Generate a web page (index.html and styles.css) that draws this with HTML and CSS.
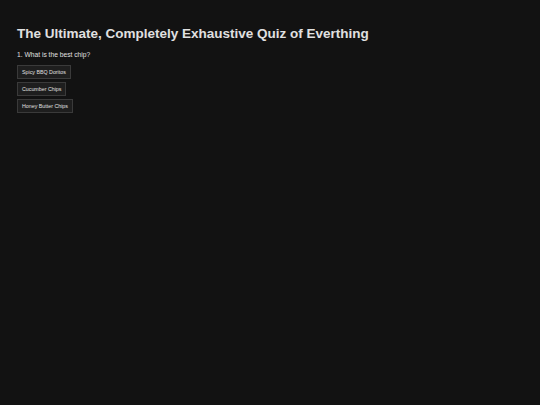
FILE: index.html
```html
<!DOCTYPE html>
<html lang="en">
<head>
    <meta charset="UTF-8">
    <meta name="viewport" content="width=device-width, initial-scale=1.0">
    <title>Quiz</title>
<link rel="stylesheet" href="styles.css">
</head>
<body>
    <div class="quiz">
        <h1 class="quiz-title">The Ultimate, Completely Exhaustive Quiz of Everthing</h1>
        <p class="question">1. What is the best chip?</p>
        <div class="answers">
            <button class="answer">Spicy BBQ Doritos</button>
            <button class="answer">Cucumber Chips</button>
            <button class="answer">Honey Butter Chips</button>
        </div>
    </div>
</body>
</html>
```

FILE: styles.css
```css
body {
    font-family: "Liberation Sans", Arial, sans-serif;
    background-color: #121212;
    color: #e0e0e0;
    margin: 0;
    padding: 0;
}

.quiz {
    padding: 26px 17px;
}

.quiz-title {
    font-size: 13.5px;
    font-weight: bold;
    margin: 0 0 10px 0;
}

.question {
    font-size: 6.7px;
    margin: 0 0 7px 0;
}

.answers {
    display: flex;
    flex-direction: column;
    align-items: flex-start;
    gap: 3px;
}

.answer {
    font-family: "Liberation Sans", Arial, sans-serif;
    font-size: 5.3px;
    color: #e0e0e0;
    background-color: #1e1e1e;
    border: 1px solid #3a3a3a;
    padding: 0 4px;
    height: 14px;
}
```
